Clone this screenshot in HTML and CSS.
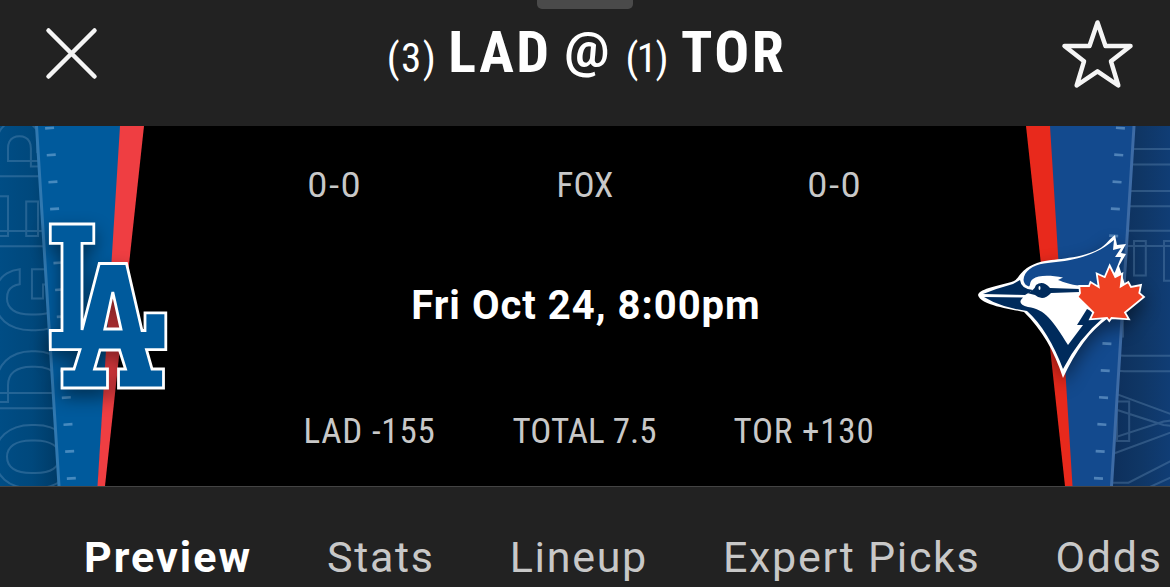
FILE: index.html
```html
<!DOCTYPE html>
<html lang="en">
<head>
    <meta charset="UTF-8">
    <meta name="viewport" content="width=device-width, initial-scale=1.0">
    <title>LAD @ TOR</title>
    <link rel="stylesheet" href="styles.css">
</head>
<body>
    <header class="header">
        <div class="grabber"></div>
        <button class="icon-btn close-btn" aria-label="Close">
            <svg width="54" height="54" viewBox="44 26 54 54">
                <path d="M48.5 30.5L94.5 76.5M94.5 30.5L48.5 76.5"/>
            </svg>
        </button>
        <h1 class="title">
            <span class="rank">(3)</span><span class="team">LAD</span><span class="at">@</span><span class="rank rank-home">(1)</span><span class="team">TOR</span>
        </h1>
        <button class="icon-btn star-btn" aria-label="Favorite">
            <svg width="76" height="74" viewBox="1060 18 76 74">
                <path d="M1097.5 22.5L1105.5 46H1130.5L1111 61.3L1118.3 85.5L1097.5 71.3L1076.7 85.5L1084 61.3L1064.5 46H1089.5Z"/>
            </svg>
        </button>
    </header>

    <main class="matchup">
        <svg class="side" width="170" height="360" viewBox="0 126 170 360">
            <defs>
                <linearGradient id="awayShade">
                    <stop offset="0" stop-color="#004d85"/>
                    <stop offset="0.55" stop-color="#00487c"/>
                    <stop offset="1" stop-color="#003b67"/>
                </linearGradient>
            </defs>
            <path d="M0 126H36L58 486H0Z" fill="url(#awayShade)"/>
            <text class="wordmark" transform="rotate(-90)" x="-576 -493 -415 -335 -253 -183" y="71">DODGER</text>
            <path d="M36 126H121L98 486H58Z" fill="#005a9c"/>
            <path d="M120 126H144L105 486H97.5Z" fill="#ef3e42"/>
            <path d="M36.5 126L59 486" stroke="#3078b0" stroke-width="3"/>
            <path class="ticks" d="M49.5 126.7L71.8 486"/>
            <g class="logo">
                <path d="M50.3 224H93.8V243.3H82V330L99.3 263.5H126.5L142 330.5H145V312.8H165.8V349.7H146.5L152 369H163.5V388H118.5V369H125.5L119.5 350H100L94.5 369H107.5V388H62V369H74L80 349.7H50.3V330.5H62V243.3H50.3ZM112.8 292L104.8 329H121Z" fill="#005a9c" fill-rule="evenodd" stroke="#fff" stroke-width="2.8"/>
            </g>
        </svg>

        <div class="info">
            <div class="records">
                <span class="record">0-0</span>
                <span>FOX</span>
                <span class="record">0-0</span>
            </div>
            <div class="start-time">Fri Oct 24, 8:00pm</div>
            <div class="odds">
                <span class="line">LAD -155</span>
                <span>TOTAL 7.5</span>
                <span class="line">TOR +130</span>
            </div>
        </div>

        <svg class="side" width="200" height="360" viewBox="970 126 200 360">
            <defs>
                <linearGradient id="homeShade">
                    <stop offset="0" stop-color="#0d2f5b"/>
                    <stop offset="0.5" stop-color="#0f3665"/>
                    <stop offset="1" stop-color="#103d75"/>
                </linearGradient>
            </defs>
            <path d="M1134 126H1170V486H1111Z" fill="url(#homeShade)"/>
            <text class="wordmark" transform="rotate(90)" x="143 224 319 388 458" y="-1101">UEJAY</text>
            <path d="M1049 126H1134L1111 486H1071Z" fill="#134a8e"/>
            <path d="M1026 126H1050L1072.5 486H1065Z" fill="#e8291c"/>
            <path d="M1134 126L1111.5 486" stroke="#3d6ba5" stroke-width="3"/>
            <path class="ticks" d="M1120.5 126.7L1098 486"/>
            <g class="logo">
                <path fill="#fff" d="M978 295C980 288 1000 286 1014 281C1019 279 1020 269 1037 263C1050 258 1070 261 1095 251C1105 247 1108 240 1115 235L1117 245L1126 244L1121 253L1126 254L1119 266L1130 300L1108 318C1090 331 1076 350 1063 378C1054 350 1042 330 1024 312C1010 309 980 305 978 295Z"/>
                <path fill="#134a8e" d="M1023.5 280C1024 271 1033 265 1044 263.5C1065 261 1090 260 1114 240L1113 250L1121 248L1115 257L1121 257L1115 272L1098 290L1080 285.5C1070 285 1064 282 1058 280L1063 277.5C1050 275 1038 275 1033 279C1029 282 1031 285 1029 286.5Q1024 285 1023.5 280Z"/>
                <path fill="#002b5c" d="M983 294Q998 288 1013 284L1020 280Q1021 289 1033 290L1025 295Z"/>
                <path fill="#002b5c" d="M984 297L1023 297.5Q1016 304 1028 307C1045 309 1053 321 1068 345L1083 325H1077L1087 309L1104 317Q1079 338 1063 369C1054 345 1041 323 1027 311Q1000 307 984 297Z"/>
                <path fill="#002b5c" d="M1027 293Q1034 291 1036 285Q1043 280 1050 288L1080 289V292L1051 293Q1043 302 1035 295Z"/>
                <ellipse cx="1039.5" cy="288" rx="1" ry="2" fill="#fff"/>
                <path class="leaf" d="M1109.7 265.5L1115.3 277L1122.3 273.5L1120.7 286.5L1128.3 282L1131 287L1141 285L1139.3 293L1144 297L1125 312.5L1129 319.3L1111.5 318L1109.3 321L1107 318L1090 319.3L1093.3 312.5L1077.5 297L1080 293L1079.3 286L1089 286L1090.5 282L1098.7 287L1096.7 273.5L1104.7 277Z"/>
            </g>
        </svg>
    </main>

    <nav class="tabs">
        <a class="tab active">Preview</a>
        <a class="tab">Stats</a>
        <a class="tab">Lineup</a>
        <a class="tab">Expert Picks</a>
        <a class="tab">Odds</a>
    </nav>
</body>
</html>
```
FILE: styles.css
```css
* {
    box-sizing: border-box;
}

body {
    margin: 0;
    height: 587px;
    overflow: hidden;
    background-color: #222;
    color: #fff;
    font-family: Roboto, "Liberation Sans", sans-serif;
}

.header {
    position: relative;
    display: flex;
    justify-content: space-between;
    align-items: flex-start;
    height: 126px;
    padding: 18px 34px 0 44px;
}

.grabber {
    position: absolute;
    top: -6px;
    left: 537px;
    width: 96px;
    height: 15px;
    border-radius: 5px;
    background-color: #4a4a4a;
}

.icon-btn {
    padding: 0;
    border: none;
    background: none;
}

.close-btn {
    margin-top: 8px;
}

.icon-btn svg {
    display: block;
    fill: none;
    stroke: #f5f5f5;
    stroke-width: 4.5;
    stroke-linecap: round;
    stroke-linejoin: round;
}

.title {
    display: flex;
    align-items: baseline;
    margin: 0 0 0 15px;
    font-size: 58px;
    font-stretch: 75%;
    line-height: 68px;
    white-space: nowrap;
}

.team {
    letter-spacing: 2.5px;
}

.rank {
    font-size: 41px;
    font-weight: 400;
    letter-spacing: 1.5px;
    margin-right: 11px;
}

.rank-home {
    letter-spacing: -1.5px;
    margin-right: 14px;
}

.at {
    position: relative;
    top: -5px;
    font-size: 50px;
    font-stretch: 100%;
    font-weight: 700;
    margin: 0 16px 0 13px;
}

/* scoreboard */
.matchup {
    display: flex;
    height: 361px;
    background-color: #000;
    border-bottom: 1px solid #444;
}

.side {
    display: block;
    flex: none;
}

.wordmark {
    font-size: 105px;
    font-weight: 700;
    fill: none;
    stroke: rgba(130, 170, 205, 0.28);
    stroke-width: 2;
}

.ticks {
    stroke: rgba(140, 185, 225, 0.5);
    stroke-width: 9;
    stroke-dasharray: 2.7 24.3;
}

.logo {
    filter: drop-shadow(0 8px 9px rgba(0, 0, 0, 0.45));
}

.leaf {
    fill: #ef4123;
    stroke: #fff;
    stroke-width: 1.8;
}

.info {
    flex: 1;
    color: #c8c8c8;
    font-size: 35px;
    font-stretch: 75%;
    font-weight: 400;
    line-height: 40px;
    text-align: center;
    white-space: nowrap;
}

.records {
    display: grid;
    grid-template-columns: repeat(3, 250px);
    padding: 40px 0 0 40px;
}

.record {
    font-stretch: 100%;
    letter-spacing: 2px;
}

.start-time {
    margin: 76px 0 0 32px;
    color: #fff;
    font-size: 40px;
    font-stretch: 100%;
    font-weight: 700;
    letter-spacing: 1px;
    line-height: 48px;
}

.odds {
    display: flex;
    justify-content: center;
    gap: 77px;
    margin: 82px 0 0 38px;
}

.line {
    letter-spacing: 0.8px;
}

.tabs {
    display: flex;
    gap: 75px;
    padding: 44px 0 0 84px;
    font-size: 43px;
    line-height: 52px;
    white-space: nowrap;
}

.tab {
    color: #c8c8c8;
    font-weight: 400;
    letter-spacing: 1.7px;
}

.tab.active {
    color: #fff;
    font-weight: 700;
    letter-spacing: 2px;
}
```
